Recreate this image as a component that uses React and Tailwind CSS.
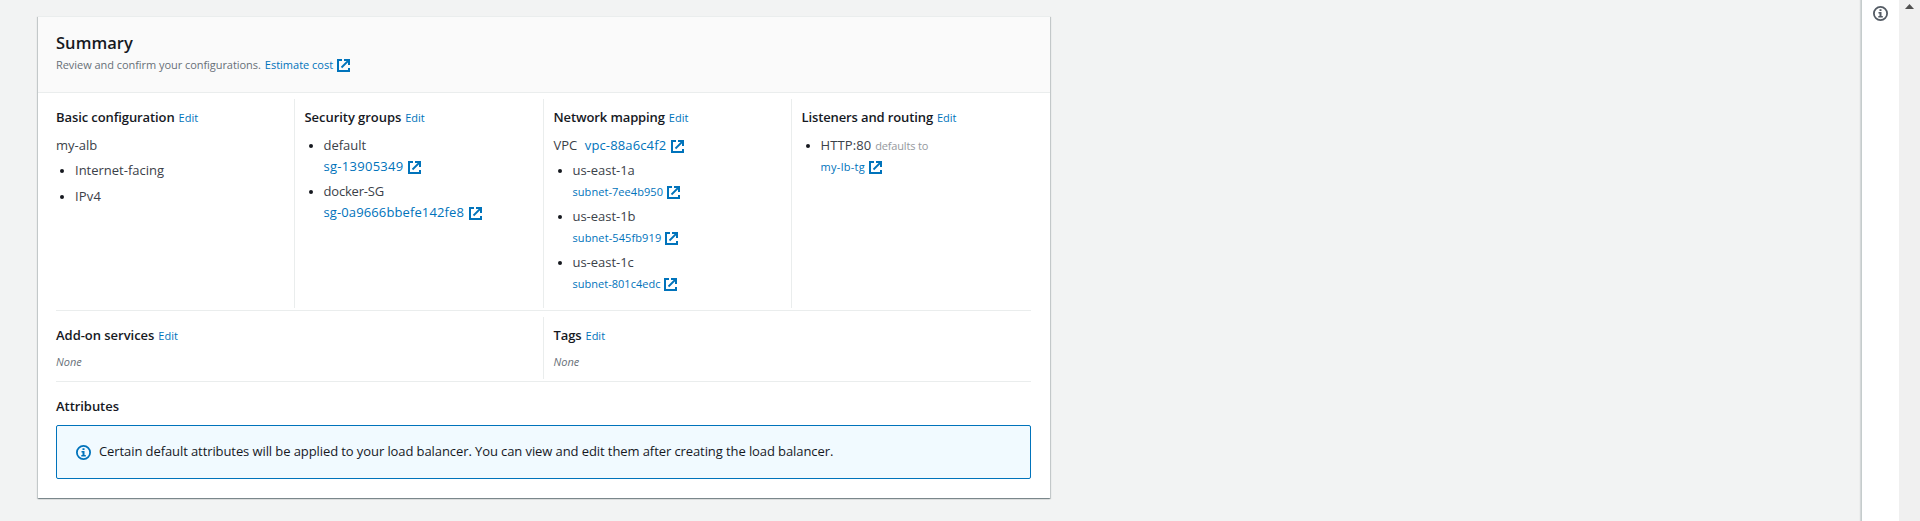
function ExternalIcon({ className = "ml-[4px]" }) {
  return (
    <svg
      className={`inline-block h-[13px] w-[13px] align-[-3px] ${className}`}
      viewBox="0 0 13 13"
      fill="none"
      stroke="#0073bb"
      strokeWidth="2"
      aria-hidden="true"
    >
      <path d="M5 1H1v11h11V9" />
      <path d="M7 1h5v5" />
      <path d="M12 1 4.5 8.5" strokeWidth="1.8" />
    </svg>
  );
}

function InfoIcon({ color, className = "" }) {
  return (
    <svg className={`block h-[15px] w-[15px] shrink-0 ${className}`} viewBox="0 0 15 15" fill="none" aria-hidden="true">
      <circle cx="7.5" cy="7.5" r="6.6" stroke={color} strokeWidth="1.8" />
      <path d="M6.5 3.2h2v1.9h-2zM5.5 6h3v4h1.3v1.6H5.3V10h1.2V7.5h-1z" fill={color} />
    </svg>
  );
}

function Heading({ children, tracking, edit = true }) {
  return (
    <h3 className="h-[22px] text-[13px] leading-[22px] font-semibold whitespace-nowrap text-[#16191f]">
      <span className={tracking}>{children}</span>
      {edit && (
        <a href="#" className="ml-[4px] text-[11px] font-normal text-[#0073bb]">
          Edit
        </a>
      )}
    </h3>
  );
}

function Item({ children }) {
  return (
    <li className="flex">
      <span className="mt-[9px] ml-[4px] h-[4px] w-[4px] shrink-0 rounded-full bg-[#16191f]" />
      <div className="ml-[11px] whitespace-nowrap">{children}</div>
    </li>
  );
}

const subnets = [
  { zone: "us-east-1a", id: "subnet-7ee4b950", tracking: "tracking-[0.057px]" },
  { zone: "us-east-1b", id: "subnet-545fb919", tracking: "tracking-[0.1px]" },
  { zone: "us-east-1c", id: "subnet-801c4edc", tracking: "tracking-[0.02px]" },
];

const listClass = "flex flex-col gap-[4px]";
const bodyClass = "mt-[7px] text-[13px] leading-[21px] text-[#3b4149]";
const columnClass = "border-l border-[#eaeded] pt-[7px] pl-[9.5px]";

export default function App() {
  return (
    <div className="flex h-[521px] bg-[#f2f3f3] font-['Open_Sans','Noto_Sans',sans-serif] text-[13px]">
      <main className="min-w-0 flex-1 pt-[16px] pl-[38px]">
        <section className="h-[482px] w-[1012px] bg-white shadow-[0_1px_1px_0_rgba(0,28,36,0.3),1px_1px_1px_0_rgba(0,28,36,0.15),-1px_1px_1px_0_rgba(0,28,36,0.15)]">
          <header className="h-[77px] border-t border-b border-[#eaeded] bg-[#fafafa] px-[18px] pt-[15px]">
            <h2 className="text-[16.5px] leading-[22px] font-semibold tracking-[0.05px] text-[#16191f]">Summary</h2>
            <p className="text-[11px] leading-[22px] text-[#687078]">
              <span className="tracking-[-0.05px]">Review and confirm your configurations.</span>
              <a href="#" className="ml-[4px] text-[#0073bb]">
                Estimate cost
                <ExternalIcon />
              </a>
            </p>
          </header>

          <div className="pr-[19px] pl-[18px]">
            <div className="grid h-[218px] grid-cols-[238px_249px_248px_1fr] border-b border-[#eaeded] pt-[6px] pb-[2px]">
              <div className="pt-[7px]">
                <Heading tracking="tracking-[-0.1px]">Basic configuration</Heading>
                <div className={bodyClass}>
                  <p className="mb-[4px]">my-alb</p>
                  <ul className="flex flex-col gap-[5px]">
                    <Item>Internet-facing</Item>
                    <Item>
                      <span className="tracking-[0.15px]">IPv4</span>
                    </Item>
                  </ul>
                </div>
              </div>

              <div className={columnClass}>
                <Heading tracking="tracking-[-0.05px]">Security groups</Heading>
                <ul className={`${bodyClass} ${listClass}`}>
                  <Item>
                    <div className="tracking-[-0.036px]">default</div>
                    <a href="#" className="block text-[#0073bb]">
                      <span className="tracking-[0.281px]">sg-13905349</span>
                      <ExternalIcon className="ml-[4.5px]" />
                    </a>
                  </Item>
                  <Item>
                    <div className="tracking-[-0.191px]">docker-SG</div>
                    <a href="#" className="block text-[#0073bb]">
                      <span className="tracking-[0.119px]">sg-0a9666bbefe142fe8</span>
                      <ExternalIcon className="ml-[4.5px]" />
                    </a>
                  </Item>
                </ul>
              </div>

              <div className={columnClass}>
                <Heading tracking="tracking-[-0.11px]">Network mapping</Heading>
                <div className={bodyClass}>
                  <p className="mb-[4px] whitespace-nowrap">
                    VPC
                    <a href="#" className="ml-[7.5px] text-[#0073bb]">
                      <span className="tracking-[0.137px]">vpc-88a6c4f2</span>
                      <ExternalIcon className="ml-[5px]" />
                    </a>
                  </p>
                  <ul className={listClass}>
                    {subnets.map((s) => (
                      <Item key={s.id}>
                        <div className="tracking-[-0.03px]">{s.zone}</div>
                        <a href="#" className="block text-[11px] text-[#0073bb]">
                          <span className={s.tracking}>{s.id}</span>
                          <ExternalIcon className="ml-[3.5px]" />
                        </a>
                      </Item>
                    ))}
                  </ul>
                </div>
              </div>

              <div className={columnClass}>
                <Heading tracking="tracking-[-0.12px]">Listeners and routing</Heading>
                <ul className={`${bodyClass} ${listClass}`}>
                  <Item>
                    <div>
                      <span className="tracking-[0.1px]">HTTP:80</span>
                      <span className="ml-[4px] text-[11px] tracking-[-0.17px] text-[#95999e]">defaults to</span>
                    </div>
                    <a href="#" className="block text-[11px] text-[#0073bb]">
                      <span className="tracking-[0.3px]">my-lb-tg</span>
                      <ExternalIcon />
                    </a>
                  </Item>
                </ul>
              </div>
            </div>

            <div className="grid h-[71px] grid-cols-[487px_1fr] border-b border-[#eaeded] pt-[6px] pb-[2px]">
              <div className="pt-[7px]">
                <Heading tracking="tracking-[-0.03px]">Add-on services</Heading>
                <p className="mt-[5px] text-[11px] leading-[21px] text-[#687078] italic">None</p>
              </div>
              <div className={columnClass}>
                <Heading tracking="tracking-[-0.1px]">Tags</Heading>
                <p className="mt-[5px] text-[11px] leading-[21px] text-[#687078] italic">None</p>
              </div>
            </div>

            <div className="pt-[13px]">
              <Heading tracking="tracking-[-0.05px]" edit={false}>
                Attributes
              </Heading>
              <div className="mt-[8px] flex h-[54px] items-center rounded-[2px] border border-[#0073bb] bg-[#f1faff] pl-[19px]">
                <InfoIcon color="#0073bb" />
                <p className="ml-[8px] tracking-[-0.09px] whitespace-nowrap text-[#16191f]">
                  Certain default attributes will be applied to your load balancer. You can view and edit them after creating the load balancer.
                </p>
              </div>
            </div>
          </div>
        </section>
      </main>

      <aside className="flex w-[38px] justify-center border-l border-[#c5cccc] bg-white pt-[6px] shadow-[-1px_0_1px_0_rgba(0,28,36,0.12)]">
        <InfoIcon color="#545b64" />
      </aside>
      <div className="flex w-[21px] justify-center bg-[#f0f0f0] pt-[4px]">
        <svg className="block h-[5px] w-[9px]" viewBox="0 0 9 5" aria-hidden="true">
          <path d="M4.5 0 9 5H0z" fill="#505050" />
        </svg>
      </div>
    </div>
  );
}
